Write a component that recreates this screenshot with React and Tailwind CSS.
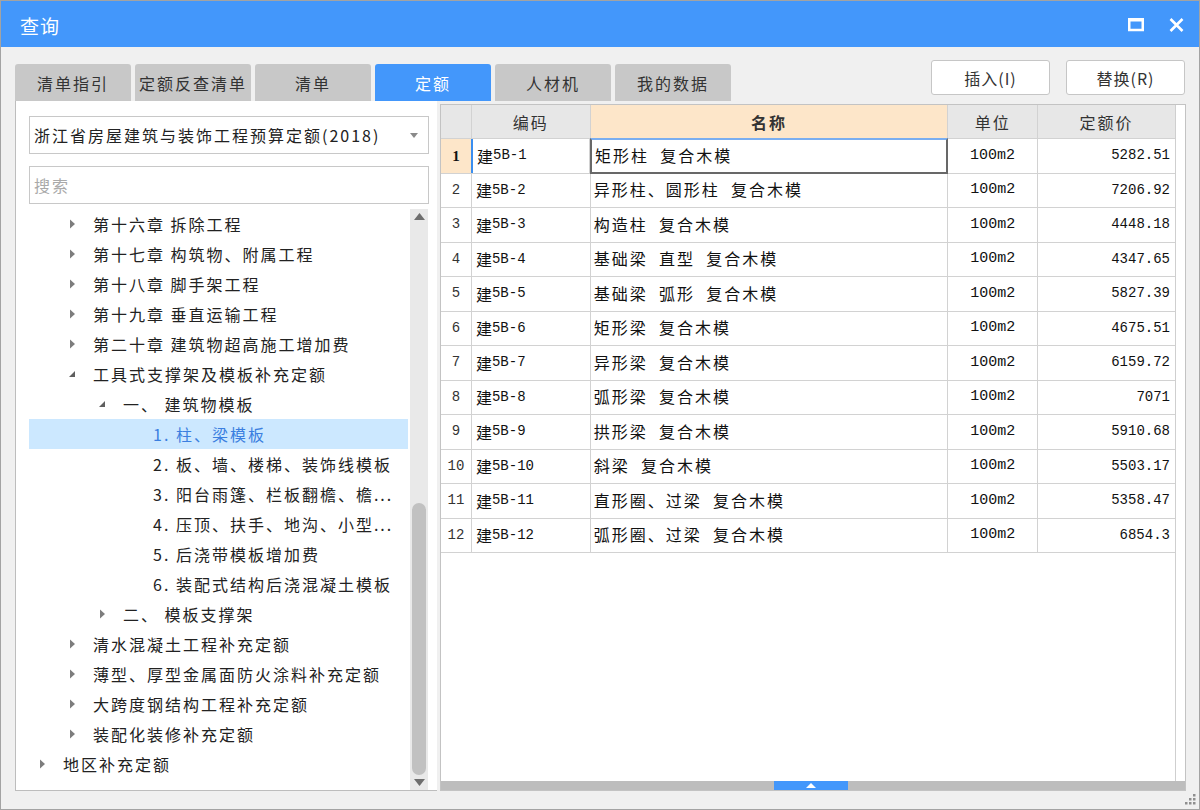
const CJK = "font-['Noto_Sans_CJK_SC',sans-serif]";

const tabs = ["清单指引", "定额反查清单", "清单", "定额", "人材机", "我的数据"];

const tree = [
  { level: 1, arrow: "right", text: "第十六章 拆除工程" },
  { level: 1, arrow: "right", text: "第十七章 构筑物、附属工程" },
  { level: 1, arrow: "right", text: "第十八章 脚手架工程" },
  { level: 1, arrow: "right", text: "第十九章 垂直运输工程" },
  { level: 1, arrow: "right", text: "第二十章 建筑物超高施工增加费" },
  { level: 1, arrow: "down", text: "工具式支撑架及模板补充定额" },
  { level: 2, arrow: "down", text: "一、 建筑物模板" },
  { level: 3, text: "1. 柱、梁模板", selected: true },
  { level: 3, text: "2. 板、墙、楼梯、装饰线模板" },
  { level: 3, text: "3. 阳台雨篷、栏板翻檐、檐..." },
  { level: 3, text: "4. 压顶、扶手、地沟、小型..." },
  { level: 3, text: "5. 后浇带模板增加费" },
  { level: 3, text: "6. 装配式结构后浇混凝土模板" },
  { level: 2, arrow: "right", text: "二、 模板支撑架" },
  { level: 1, arrow: "right", text: "清水混凝土工程补充定额" },
  { level: 1, arrow: "right", text: "薄型、厚型金属面防火涂料补充定额" },
  { level: 1, arrow: "right", text: "大跨度钢结构工程补充定额" },
  { level: 1, arrow: "right", text: "装配化装修补充定额" },
  { level: 0, arrow: "right", text: "地区补充定额" },
];

const rows = [
  ["5B-1", "矩形柱 复合木模", "5282.51"],
  ["5B-2", "异形柱、圆形柱 复合木模", "7206.92"],
  ["5B-3", "构造柱 复合木模", "4448.18"],
  ["5B-4", "基础梁 直型 复合木模", "4347.65"],
  ["5B-5", "基础梁 弧形 复合木模", "5827.39"],
  ["5B-6", "矩形梁 复合木模", "4675.51"],
  ["5B-7", "异形梁 复合木模", "6159.72"],
  ["5B-8", "弧形梁 复合木模", "7071"],
  ["5B-9", "拱形梁 复合木模", "5910.68"],
  ["5B-10", "斜梁 复合木模", "5503.17"],
  ["5B-11", "直形圈、过梁 复合木模", "5358.47"],
  ["5B-12", "弧形圈、过梁 复合木模", "6854.3"],
];

function Arrow({ dir }) {
  if (dir === "down") {
    return (
      <svg width="10" height="10" viewBox="0 0 10 10">
        <polygon points="8,2 8,8 2,8" fill="#5f5f5f" />
      </svg>
    );
  }
  return (
    <svg width="10" height="10" viewBox="0 0 10 10">
      <polygon points="3,0.5 8,5 3,9.5" fill="#7d7d7d" />
    </svg>
  );
}

function TreeRow({ level, arrow, text, selected }) {
  return (
    <div
      className={`h-[30px] flex items-center mr-[2px] ${selected ? "bg-[#cce8ff] text-[#3b7fe0]" : "text-[#222]"}`}
      style={{ paddingLeft: 8 + level * 30 }}
    >
      <div className="w-[10px] h-[10px] flex items-center justify-center">{arrow && <Arrow dir={arrow} />}</div>
      <span className="ml-[16px] whitespace-pre text-[16px] tracking-[2px]">{text}</span>
    </div>
  );
}

export default function App() {
  return (
    <div className={`w-[1200px] h-[810px] bg-[#f0f0f0] border border-[#a3a3a3] flex flex-col ${CJK}`}>
      {/* title bar */}
      <div className="h-[46px] bg-[#4397fb] flex items-center justify-between pl-[19px] pr-[15px]">
        <span className="text-white text-[19px] tracking-[1px] pt-[5px]">查询</span>
        <div className="flex items-center gap-[25px] pt-[1px]">
          <svg width="16" height="14" viewBox="0 0 16 14">
            <rect x="1.25" y="1.5" width="13.5" height="10.5" fill="none" stroke="#fff" strokeWidth="2.5" />
            <rect x="0" y="0" width="16" height="3.5" fill="#fff" />
          </svg>
          <svg width="15" height="14" viewBox="0 0 15 14">
            <path d="M1.5 1 L13.5 13 M13.5 1 L1.5 13" stroke="#fff" strokeWidth="2.6" />
          </svg>
        </div>
      </div>

      <div className="flex-1 flex flex-col pl-[14px] pr-[13px] pb-[18px]">
        {/* tabs + buttons */}
        <div className="mt-[13px] h-[41px] flex justify-between">
          <div className="flex gap-[4px] items-end">
            {tabs.map((t) => (
              <div
                key={t}
                className={`w-[116px] h-[37px] rounded-t-[3px] flex items-center justify-center text-[16px] tracking-[2px] ${
                  t === "定额" ? "bg-[#4397fb] text-white" : "bg-[#c8c8c8] text-[#333]"
                }`}
              >
                {t}
              </div>
            ))}
          </div>
          <div className="flex gap-[16px] items-start mr-[1px]">
            {["插入(I)", "替换(R)"].map((b) => (
              <div
                key={b}
                className="w-[119px] h-[35px] bg-white border border-[#c6c6c6] rounded-[3px] flex items-center justify-center text-[16px] tracking-[1px] text-[#333]"
              >
                {b}
              </div>
            ))}
          </div>
        </div>

        {/* content */}
        <div className="flex-1 flex gap-[3px] min-h-0">
          {/* left panel */}
          <div className="w-[422px] bg-white border-l border-b border-[#bdbdbd] flex flex-col pl-[13px] pr-[8px]">
            <div className="mt-[15px] h-[38px] border border-[#c8c8c8] flex items-center justify-between pl-[4px] pr-[10px]">
              <span className="text-[16px] tracking-[2px] text-[#222] whitespace-nowrap">浙江省房屋建筑与装饰工程预算定额(2018)</span>
              <svg width="8" height="5" viewBox="0 0 8 5">
                <polygon points="0,0 8,0 4,5" fill="#8a8a8a" />
              </svg>
            </div>
            <div className="mt-[12px] h-[38px] border border-[#c8c8c8] flex items-center pl-[4px]">
              <span className="text-[16px] tracking-[2px] text-[#a9a9a9]">搜索</span>
            </div>
            <div className="mt-[5px] flex-1 flex min-h-0">
              <div className="flex-1 overflow-hidden">
                {tree.map((r, i) => (
                  <TreeRow key={i} {...r} />
                ))}
              </div>
              <div className="w-[18px] bg-[#e9e9e9] flex flex-col items-center mr-[1px]">
                <svg className="mt-[4px]" width="11" height="7" viewBox="0 0 11 7">
                  <polygon points="0,7 11,7 5.5,0" fill="#6e6e6e" />
                </svg>
                <div className="flex-1 w-full flex flex-col justify-end px-[2px]">
                  <div className="h-[272px] bg-[#c1c1c1] rounded-full" />
                </div>
                <svg className="my-[4px]" width="11" height="7" viewBox="0 0 11 7">
                  <polygon points="0,0 11,0 5.5,7" fill="#6e6e6e" />
                </svg>
              </div>
            </div>
          </div>

          {/* right panel */}
          <div className="flex-1 mt-[3px] bg-white border border-[#c3c3c3] flex flex-col">
            <div className="flex-1 flex">
              <div className="w-[735px] border-r border-[#cfcfcf] self-stretch">
                {/* header */}
                <div className="flex h-[34px] bg-[#e7e7e7] text-[#333] text-[16px] tracking-[2px] border-b border-[#d2d2d2]">
                  <div className="w-[31px] border-r border-[#d2d2d2]" />
                  <div className="w-[119px] border-r border-[#d2d2d2] flex items-center justify-center">编码</div>
                  <div className="w-[358px] border-r border-[#d2d2d2] flex items-center justify-center bg-[#fde6c9] font-bold">名称</div>
                  <div className="w-[90px] border-r border-[#d2d2d2] flex items-center justify-center">单位</div>
                  <div className="w-[137px] flex items-center justify-center">定额价</div>
                </div>
                {rows.map((r, i) => {
                  const first = i === 0;
                  return (
                    <div key={i} className="flex h-[34.5px] border-b border-[#d2d2d2] text-[#111]">
                      <div
                        className={`w-[31px] border-r border-[#d2d2d2] flex items-center justify-center ${
                          first
                            ? "bg-[#fde6c9] font-['Liberation_Serif',serif] font-bold text-[15px]"
                            : "font-['Liberation_Mono',monospace] text-[14px] text-[#333]"
                        }`}
                      >
                        {i + 1}
                      </div>
                      <div
                        className={`w-[119px] border-r border-[#d2d2d2] flex items-center pl-[4px] ${
                          first ? "border-l-2 border-l-[#3a8ef0] pl-[3px] -ml-[1px]" : ""
                        }`}
                      >
                        <span className="text-[16px]">建</span>
                        <span className="font-['Liberation_Mono',monospace] text-[14px]">{r[0]}</span>
                      </div>
                      <div
                        className={`w-[358px] flex items-center pl-[3px] pb-[2px] text-[16px] tracking-[2px] whitespace-pre ${
                          first
                            ? "border-2 border-[#686868] border-t-[#7aaef0] -mt-[1px] h-[35.5px]"
                            : "border-r border-[#d2d2d2]"
                        }`}
                      >
                        {r[1].replaceAll(" ", "  ")}
                      </div>
                      <div className="w-[90px] border-r border-[#d2d2d2] flex items-center justify-center font-['Liberation_Mono',monospace] text-[15px]">
                        100m2
                      </div>
                      <div className="w-[137px] flex items-center justify-end pr-[5px] font-['Liberation_Mono',monospace] text-[14px]">
                        {r[2]}
                      </div>
                    </div>
                  );
                })}
              </div>
              <div className="flex-1" />
            </div>
            <div className="h-[9px] bg-[#bdbdbd] flex">
              <div className="w-[333px]" />
              <div className="w-[74px] bg-[#4397fb] flex items-center justify-center">
                <svg width="10" height="5" viewBox="0 0 10 5">
                  <polygon points="0,5 10,5 5,0" fill="#fff" />
                </svg>
              </div>
            </div>
          </div>
        </div>
      </div>

      {/* resize grip */}
      <div className="relative">
        <svg className="absolute right-[2px] bottom-[2px]" width="16" height="16" viewBox="0 0 16 16">
          {[
            [12, 3],
            [8, 7],
            [12, 7],
            [4, 11],
            [8, 11],
            [12, 11],
          ].map(([x, y], i) => (
            <rect key={i} x={x} y={y} width="2.5" height="2.5" fill="#8f8f8f" />
          ))}
        </svg>
      </div>
    </div>
  );
}
